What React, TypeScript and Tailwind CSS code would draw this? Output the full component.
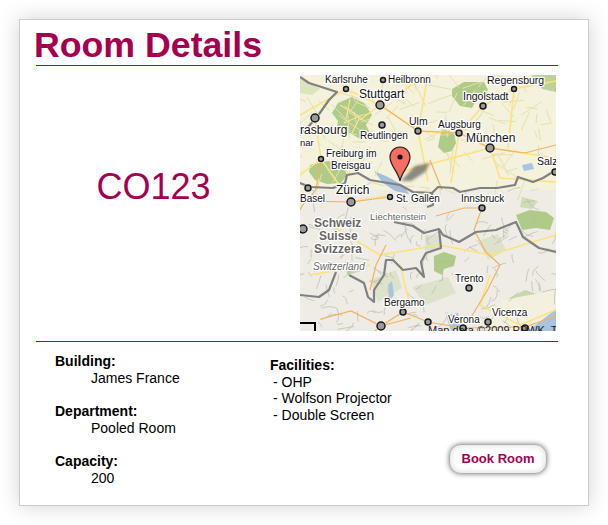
const dots: [number, number, number][] = [
  [46,14,2.5],[83,5,2.5],[214,14,2.5],[80,30,4],[183,31,3],[15,43,4],[82,50,3],[118,56,3],[159,58,3],[190,73,4],[21,84,2.5],[255,97,3],[8,113,3],[51,127,4],[90,122,2.5],[182,133,3],[3,154,4],[169,213,3],[103,237,3],[128,247,3],[81,251,4],[188,247,3],[163,253,3],[225,253,3],
];
const labels: [string, number, number, number][] = [
  ["Karlsruhe",25,8,10],["Heilbronn",88,8,10],["Regensburg",187,9,10.5],["Stuttgart",59,23,12],["Ingolstadt",163,25,10.5],["rasbourg",0,59,12],["Reutlingen",60,64,10],["Ulm",109,50,10.5],["Augsburg",138,53,10],["München",166,67,12],["nar",0,71,9.5],["Freiburg im",26,82,10],["Breisgau",31,94,10],["Salz",237,90,10.5],["Zürich",36,119,12],["Basel",0,127,10],["St. Gallen",96,127,10],["Innsbruck",161,127,10],["Trento",155,207,10],["Bergamo",84,231,10],["Vicenza",192,241,10],["Verona",148,248,10],
];

const hash = (n: number) => {
  const v = Math.sin(n * 12.9898) * 43758.5453;
  return v - Math.floor(v);
};
const terrain = Array.from({ length: 150 }, (_, i) => {
  const x = hash(i + 1) * 256;
  const y = 112 + hash(i + 200) * 144;
  const a = hash(i + 400) * 6.28;
  const l = 5 + hash(i + 600) * 12;
  const x2 = x + Math.cos(a) * l;
  const y2 = y + Math.sin(a) * l;
  const cx = (x + x2) / 2 + (hash(i + 800) - 0.5) * 8;
  const cy = (y + y2) / 2 + (hash(i + 900) - 0.5) * 8;
  return `M${x.toFixed(1)} ${y.toFixed(1)}Q${cx.toFixed(1)} ${cy.toFixed(1)} ${x2.toFixed(1)} ${y2.toFixed(1)}`;
}).join("");
const lowland = Array.from({ length: 110 }, (_, i) => {
  const x = hash(i + 1000) * 256;
  const y = hash(i + 1200) * 115;
  const a = hash(i + 1400) * 6.28;
  const l = 8 + hash(i + 1600) * 18;
  return `M${x.toFixed(1)} ${y.toFixed(1)}L${(x + Math.cos(a) * l).toFixed(1)} ${(y + Math.sin(a) * l).toFixed(1)}`;
}).join("");

function MapImage() {
  return (
    <svg width="256" height="256" viewBox="0 0 256 256" className="block shrink-0 bg-[#eeece4]" style={{ fontFamily: '"Liberation Sans", Arial, sans-serif' }}>
      <rect width="256" height="115" fill="#f4f1dc" />
      <g fill="#afcb88">
        <path d="M38 28l14-6 12 6 8 12-6 10 4 8-10 6-10-6-6 4-8-4 2-12-6-8z" />
        <path d="M152 14l12-7 20 0 4 8-6 8-6 2-4 8-12-2-8-10z" />
        <path d="M142 54l12 4 2 10-4 8-8 2-6-6 2-10z" />
        <path d="M231 0h25v17l-14-3-5-7z" opacity=".8" />
        <path d="M10 90l18-4 15 4 4 10-6 8-14 1-12-4-6-8z" />
        <path d="M0 4l12 4 8 6-8 6-12-2z" opacity=".35" />
        <path d="M216 140l14-5 16 2 8 6-4 12-14-2-14 2z" />
        <path d="M134 181l10-4 12 4-2 10-10 3-2 6-8-4z" />
        <path d="M205 225l20-10 12 4-16 12-16 2z" opacity=".6" />
        <path d="M45 186l14 4 2 6-14 4z" opacity=".7" />
        <path d="M222 122l16 4-6 8-12-2z" opacity=".5" />
      </g>
      <path d="M40 30l20 12-8 16M44 48l18-8M50 24l-4 20" fill="none" stroke="#fbe58e" strokeWidth="1.2" />
      <g fill="#dbe1c6" opacity=".85">
        <path d="M70 205l26-10 6 18-24 14z" />
        <path d="M112 212l36-10 8 16-30 12z" />
        <path d="M180 165l18-6 8 16-18 10z" />
        <path d="M125 160l14 0 2 14-16 2z" />
      </g>
      <path d="M202 225l54-10v41h-70z" fill="#f4f0df" />
      <path d="M228 256l28-22v22z" fill="#a9c4e0" />
      <path d="M146 240l12-2 3 14-10 4z" fill="#a9c4e0" />
      <path d="M74 96l14 6 16 9 5 8-14-3-12-8z" fill="#a4bfd9" />
      <path d="M222 90l10-2 2 6-10 2z" fill="#a9c4e0" />
      <path d="M88 210l4-4 2 14-4 6z" fill="#a9c4e0" />
      <path d={lowland} fill="none" stroke="#e8e0ab" strokeWidth="1" />
      <path d={terrain} fill="none" stroke="#b8b8ac" strokeWidth=".9" opacity=".75" />
      <g fill="none" stroke="#fde27a" strokeWidth="1.5">
        <path d="M0 40l46-26 34 16 38 26 41 2 31 15 66 10" />
        <path d="M80 30l3-25M80 30l40-25M118 56l10-56M159 58l24-27 31-17 42-8M46 14l-12-14" />
        <path d="M190 73l-30 8-60 16M190 73l10 30 56 4M118 56l10 50M21 84l30 43M51 127l40-7M15 43l6 41" />
        <path d="M30 150l50 30 60-10 50 10 66-20M10 200l60-10M159 58l-8 50M214 14l-6 60" />
        <path d="M190 200l-10 30 40 20 36-15M100 190l10 40M0 100l20-15M60 45l20-15" />
      </g>
      <g fill="none" stroke="#f2b25f" strokeWidth="1.2">
        <path d="M80 30l38 26 41 2 31 15 35 5 31-8" />
        <path d="M130 85l8 20 4 10M21 84l-5 30-8 12 43 1 39-5" />
        <path d="M136 141l28-8 18 0 -8 22 12 22 14 13-12 24-18 30" />
        <path d="M81 251l22-14 25 10 35 6 62-1 31-11" />
        <path d="M81 251l-30-15-30 8M81 251l-6 5M81 251l30-8M70 215l6-25 10-20M0 135l8-14" />
      </g>
      <g fill="none" stroke="#808080" strokeWidth="2.2" strokeLinejoin="round">
        <path d="M0 2l9 6 28 9-8 8-12 17-9 10-8 8" />
        <path d="M0 108l10 4 23 1 12-5 2-8 11-2 12 7 30 5 13 7 19 1 1 12-6 2" />
        <path d="M132 118l6-6 15 1 7 4 20-4 17 0 18-3 3-8 15 5 10-4 13-8" />
        <path d="M94 147l19 4 11 7 15-4 4 6 16 7 17-10 20-2 20-8 7 15 16 11 17 4" />
        <path d="M139 154l2 19-15 5-5 9 3 15-8-9-13 2-10-10-7 0-2 15-10 15 0 12-6-5-4-14-15-8" />
        <path d="M36 197l-7 18-10 7-19-2" />
      </g>
      {dots.map(([x, y, r], i) => (
        <g key={i}>
          <circle cx={x} cy={y} r={r + 1.2} fill="#fff" opacity=".8" />
          <circle cx={x} cy={y} r={r} fill="#9a9a9a" stroke="#161616" strokeWidth="1.5" />
        </g>
      ))}
      <g fill="#111" stroke="#fff" strokeWidth="2.5" paintOrder="stroke" strokeLinejoin="round">
        {labels.map(([t, x, y, s]) => <text key={t} x={x} y={y} fontSize={s}>{t}</text>)}
      </g>
      <g fill="#666" stroke="#fff" strokeWidth="2.5" paintOrder="stroke" strokeLinejoin="round">
        <text x="70" y="145" fontSize="9.5">Liechtenstein</text>
        <text x="14" y="152" fontSize="12" fontWeight="bold">Schweiz</text>
        <text x="19" y="165" fontSize="12" fontWeight="bold">Suisse</text>
        <text x="14" y="178" fontSize="12" fontWeight="bold">Svizzera</text>
        <text x="13" y="195" fontSize="10" fontStyle="italic">Switzerland</text>
      </g>
      <text x="128" y="259" fontSize="11" fill="#222">Map data ©2009 PPWK, Te</text>
      <path d="M0 248h15v8" fill="none" stroke="#000" strokeWidth="2" />
      <path d="M101 106l14-15 15-3-5 9-14 9z" fill="#444" opacity=".6" className="blur-[1.5px]" />
      <path d="M100 106c-2-10-10-15-10-24a10 10 0 0 1 20 0c0 9-8 14-10 24z" fill="#f76d62" stroke="#222" strokeWidth="1.2" />
      <circle cx="100" cy="82" r="2.6" fill="#111" />
    </svg>
  );
}

function Info({ label, value }: { label: string; value: string }) {
  return (
    <div className="mb-[17px]">
      <div className="font-bold leading-[16.5px]">{label}</div>
      <div className="pl-9 leading-[16.5px]">{value}</div>
    </div>
  );
}

export default function App() {
  return (
    <div className="h-[525px] w-[608px] bg-white p-[19px] text-[14px] text-black" style={{ fontFamily: '"Liberation Sans", Arial, sans-serif' }}>
      <div className="h-[487px] w-[570px] border border-[#cccccc] bg-white pl-4 pr-[30px] shadow-[0_0_20px_rgba(0,0,0,0.18)]">
        <h1 className="-ml-[2px] h-[45px] pt-[5px] text-[35.7px] font-bold leading-[41px] text-[#a50050]">Room Details</h1>
        <div className="h-px bg-[#990099]" />
        <div className="mt-[9px] flex h-[256px]">
          <div className="flex w-[264px] items-center justify-center pb-[32px] pr-[29px] text-[36px] text-[#a50050]">CO123</div>
          <MapImage />
        </div>
        <div className="mt-[10px] h-px bg-[#990099]" />
        <div className="mt-[11px] flex pl-[19px]">
          <div className="w-[215px]">
            <Info label="Building:" value="James France" />
            <Info label="Department:" value="Pooled Room" />
            <Info label="Capacity:" value="200" />
          </div>
          <div className="flex-1 pt-[4px]">
            <div className="font-bold leading-[16.5px]">Facilities:</div>
            <div className="pl-[3px] leading-[16.7px]">
              <div>- OHP</div>
              <div>- Wolfson Projector</div>
              <div>- Double Screen</div>
            </div>
            <div className="mt-[20px] flex justify-end pr-[11px]">
              <button className="h-[30px] w-[98px] rounded-[12px] border border-[#b0b0b0] bg-white text-[13px] font-bold text-[#a50050] shadow-[0_0_5px_rgba(0,0,0,0.5),inset_0_0_7px_rgba(0,0,0,0.16)]">
                Book Room
              </button>
            </div>
          </div>
        </div>
      </div>
    </div>
  );
}
